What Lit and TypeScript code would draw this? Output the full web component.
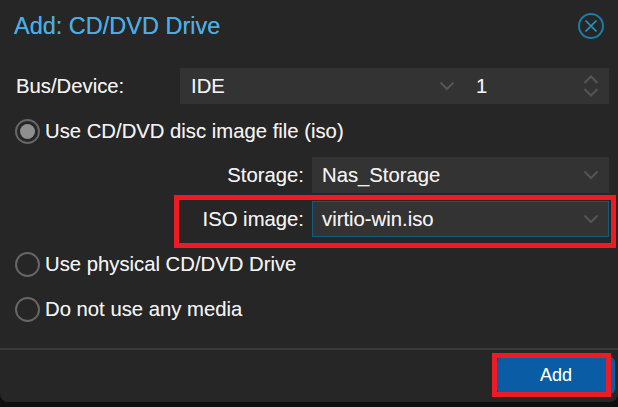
import { LitElement, html, css } from "lit";
import { customElement } from "lit/decorators.js";

const chevron = html`<svg class="chev" width="18" height="12" viewBox="0 0 18 12"><path d="M2.5 2.5 9 9l6.5-6.5" fill="none" stroke="#555" stroke-width="2"/></svg>`;

@customElement("app-root")
export class AppRoot extends LitElement {
  static styles = css`
    :host { display: block; position: relative; width: 618px; height: 407px; overflow: hidden; background: #0e0e0e;
      font-family: "Liberation Sans", Arial, sans-serif; font-size: 20.3px; color: #f2f2f2; text-shadow: 0 0 0.6px rgba(255,255,255,0.45); }
    .win { height: 402px; box-sizing: border-box; background: #262626; border-radius: 0 0 8px 8px; display: flex; flex-direction: column; }
    .head { height: 52px; flex: none; display: flex; align-items: center; justify-content: space-between; padding: 0 14px 0 14px; box-sizing: border-box; }
    .title { color: #41b0ec; font-size: 23.5px; }
    .close { display: block; }
    .body { flex: 1; padding: 16px 9px 0 15px; display: flex; flex-direction: column; }
    .row { display: flex; align-items: center; height: 36px; flex: none; }
    .lab { width: 165px; padding-left: 1px; box-sizing: border-box; flex: none; }
    .field { height: 36px; box-sizing: border-box; background: #333; display: flex; align-items: center; justify-content: space-between; padding: 0 9px 0 11px; }
    .combo { flex: 1; background: #333; display: flex; }
    .bus { flex: 1; }
    .dev { width: 144px; }
    .spin { display: flex; flex-direction: column; gap: 2px; }
    .sublab { flex: 1; text-align: right; padding-right: 8px; }
    .sub .field { width: 297px; flex: none; padding-left: 10px; }
    .sub .focus { border: 1px solid #135c7e; padding: 0 8px 0 9px; }
    .radio { display: flex; align-items: center; gap: 5px; height: 26px; flex: none; }
    .dot { width: 25px; height: 25px; flex: none; box-sizing: border-box; border-radius: 50%; border: 2px solid #666; display: flex; align-items: center; justify-content: center; }
    .dot i { width: 15px; height: 15px; border-radius: 50%; background: #8f8f8f; }
    .r1 { margin-top: 14px; }
    .s1 { margin-top: 13px; }
    .s2 { margin-top: 8px; }
    .r2 { margin-top: 14px; }
    .r3 { margin-top: 19px; }
    .foot { flex: none; height: 54px; border-top: 2px solid #3a3a3a; box-sizing: border-box; display: flex; justify-content: flex-end; align-items: flex-start; padding: 7px 3px 0 0; }
    .btn { width: 118px; height: 37px; background: #0a5ca4; color: #fff; border-radius: 5px; display: flex; align-items: center; justify-content: center; font-size: 18px; }
    .mark { position: absolute; box-sizing: border-box; border: 5px solid #ed1c24; pointer-events: none; }
    .m1 { left: 174px; top: 195px; width: 442px; height: 53px; }
    .m2 { left: 492px; top: 353px; width: 119px; height: 44px; }
  `;

  render() {
    return html`
      <div class="win">
        <div class="head">
          <span class="title">Add: CD/DVD Drive</span>
          <svg class="close" width="26" height="26" viewBox="0 0 26 26"><circle cx="13" cy="13" r="12" fill="none" stroke="#1a7da6" stroke-width="2"/><path d="M7.5 7.5l11 11M18.5 7.5l-11 11" stroke="#2396c7" stroke-width="1.7" fill="none"/></svg>
        </div>
        <div class="body">
          <div class="row">
            <span class="lab">Bus/Device:</span>
            <div class="combo">
              <div class="field bus"><span>IDE</span>${chevron}</div>
              <div class="field dev"><span>1</span>
                <span class="spin">
                  <svg width="18" height="11" viewBox="0 0 18 11"><path d="M2.5 9 9 2.5 15.5 9" fill="none" stroke="#555" stroke-width="2"/></svg>
                  <svg width="18" height="11" viewBox="0 0 18 11"><path d="M2.5 2 9 8.5 15.5 2" fill="none" stroke="#555" stroke-width="2"/></svg>
                </span>
              </div>
            </div>
          </div>
          <div class="radio r1"><span class="dot"><i></i></span>Use CD/DVD disc image file (iso)</div>
          <div class="row sub s1"><span class="sublab">Storage:</span><div class="field"><span>Nas_Storage</span>${chevron}</div></div>
          <div class="row sub s2"><span class="sublab">ISO image:</span><div class="field focus"><span>virtio-win.iso</span>${chevron}</div></div>
          <div class="radio r2"><span class="dot"></span>Use physical CD/DVD Drive</div>
          <div class="radio r3"><span class="dot"></span>Do not use any media</div>
        </div>
        <div class="foot"><div class="btn">Add</div></div>
      </div>
      <div class="mark m1"></div>
      <div class="mark m2"></div>
    `;
  }
}
